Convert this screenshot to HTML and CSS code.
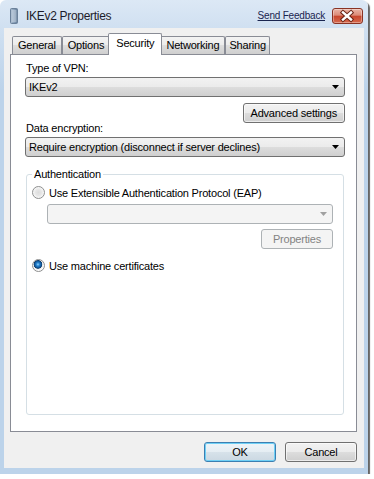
FILE: index.html
```html
<!DOCTYPE html>
<html lang="en">
<head>
    <meta charset="UTF-8">
    <meta name="viewport" content="width=device-width, initial-scale=1.0">
    <title>IKEv2 Properties</title>
    <link rel="stylesheet" href="styles.css">
</head>
<body>
    <div class="window">
        <div class="titlebar">
            <svg class="app-icon" width="8" height="16" viewBox="0 0 8 16">
                <defs>
                    <linearGradient id="tower" x1="0" y1="0" x2="1" y2="0">
                        <stop offset="0" stop-color="#a9bccf"/>
                        <stop offset="0.5" stop-color="#8ba2bb"/>
                        <stop offset="1" stop-color="#5e7894"/>
                    </linearGradient>
                </defs>
                <rect x="0.5" y="0.5" width="7" height="15" rx="1" fill="url(#tower)" stroke="#6b819a"/>
                <path d="M1.5 3h5M1.5 5h5M1.5 7h5M1.5 9h5M1.5 11h5M1.5 13h5" stroke="#dfe8f1" stroke-width="0.8"/>
            </svg>
            <span class="title">IKEv2 Properties</span>
            <a class="feedback" href="#">Send Feedback</a>
            <span class="close-btn">
                <svg width="29" height="14" viewBox="0 0 29 14">
                    <path d="M10 3.5l8 7M18 3.5l-8 7" stroke="#6a2316" stroke-width="4.4" stroke-linecap="square"/>
                    <path d="M10 3.5l8 7M18 3.5l-8 7" stroke="#fff" stroke-width="2.4" stroke-linecap="square"/>
                </svg>
            </span>
        </div>

        <div class="client">
            <div class="tabs">
                <span class="tab">General</span>
                <span class="tab">Options</span>
                <span class="tab active">Security</span>
                <span class="tab">Networking</span>
                <span class="tab narrow">Sharing</span>
            </div>

            <div class="panel">
                <div class="field-label">Type of VPN:</div>
                <div class="combo">
                    <span>IKEv2</span>
                    <svg class="arrow" width="7" height="4" viewBox="0 0 7 4"><path d="M0 0h7L3.5 4z"/></svg>
                </div>
                <div class="btn-row">
                    <span class="btn">Advanced settings</span>
                </div>

                <div class="field-label second">Data encryption:</div>
                <div class="combo">
                    <span>Require encryption (disconnect if server declines)</span>
                    <svg class="arrow" width="7" height="4" viewBox="0 0 7 4"><path d="M0 0h7L3.5 4z"/></svg>
                </div>

                <fieldset class="group">
                    <legend>Authentication</legend>
                    <div class="radio-row">
                        <span class="radio"></span>
                        <span>Use Extensible Authentication Protocol (EAP)</span>
                    </div>
                    <div class="combo disabled">
                        <span></span>
                        <svg class="arrow" width="7" height="4" viewBox="0 0 7 4"><path d="M0 0h7L3.5 4z"/></svg>
                    </div>
                    <div class="btn-row tight">
                        <span class="btn disabled">Properties</span>
                    </div>
                    <div class="radio-row lower">
                        <span class="radio checked"></span>
                        <span>Use machine certificates</span>
                    </div>
                </fieldset>
            </div>

            <div class="actions">
                <span class="btn default">OK</span>
                <span class="btn">Cancel</span>
            </div>
        </div>
    </div>
</body>
</html>
```

FILE: styles.css
```css
body {
    margin: 0;
    font-family: "Liberation Sans", Arial, sans-serif;
    font-size: 11px;
    letter-spacing: -0.2px;
    color: #000;
    background: #fff;
}
.window {
    width: 368px;
    height: 474px;
    display: flex;
    flex-direction: column;
    background: linear-gradient(#dce8f5, #d0e0f1 28px, #bcd3ea 90px, #bcd3ea);
    border-radius: 6px 6px 0 0;
    box-shadow: 2px 2px 1px rgba(0, 0, 0, 0.6);
}
.titlebar {
    height: 28px;
    flex-shrink: 0;
    display: flex;
    align-items: center;
    padding: 3px 5px 0 10px;
    box-sizing: border-box;
}
.app-icon {
    margin-right: 8px;
}
.title {
    flex: 1;
    font-size: 12px;
    letter-spacing: -0.3px;
    color: #1c1c2a;
}
.feedback {
    font-size: 10px;
    color: #1a2550;
    margin-right: 7px;
}
.close-btn {
    width: 31px;
    height: 16px;
    box-sizing: border-box;
    display: flex;
    border: 1px solid #8a3324;
    border-radius: 3px;
    background: linear-gradient(#eab4a6, #dc8a76 45%, #c8452c 50%, #d66a4e);
    box-shadow: inset 0 0 0 1px rgba(255, 255, 255, 0.35);
}
.client {
    height: 440px;
    margin: 0 4px;
    padding-top: 5px;
    box-sizing: border-box;
    display: flex;
    flex-direction: column;
    background: #f0f0f0;
}
.tabs {
    height: 22px;
    display: flex;
    align-items: flex-end;
    margin: 0 0 -1px 8px;
    position: relative;
    z-index: 1;
}
.tab {
    height: 18px;
    margin-bottom: 1px;
    padding: 0 5px;
    box-sizing: border-box;
    line-height: 17px;
    border: 1px solid #898c95;
    border-bottom: none;
    border-radius: 2px 2px 0 0;
    background: linear-gradient(#f3f3f3, #ebebeb 50%, #dddddd 50%, #cfcfcf);
}
.tab.narrow {
    padding: 0 3px;
}
.tab.active {
    height: 22px;
    margin: 0 -2px;
    padding: 0 7px;
    line-height: 18px;
    background: #fff;
    position: relative;
}
.panel {
    height: 378px;
    margin: 0 7px 0 6px;
    padding: 6px 11px 16px 14px;
    box-sizing: border-box;
    display: flex;
    flex-direction: column;
    border: 1px solid #898c95;
    background: #fff;
}
.field-label {
    line-height: 14px;
    margin-left: 1px;
}
.field-label.second {
    margin-top: -2px;
}
.combo {
    height: 20px;
    margin-top: 2px;
    padding: 0 5px 0 3px;
    box-sizing: border-box;
    display: flex;
    align-items: center;
    justify-content: space-between;
    border: 1px solid #707070;
    border-radius: 3px;
    background: linear-gradient(#f2f2f2, #ebebeb 50%, #dddddd 50%, #cfcfcf);
}
.combo.disabled {
    margin: 4px 0 0 15px;
    border-color: #adb2b5;
    background: #f4f4f4;
}
.combo.disabled .arrow {
    fill: #a0a0a0;
}
.btn-row {
    display: flex;
    justify-content: flex-end;
    margin-top: 6px;
}
.btn-row.tight {
    margin-top: 5px;
}
.btn {
    height: 20px;
    min-width: 72px;
    padding: 0 7px;
    box-sizing: border-box;
    display: flex;
    align-items: center;
    justify-content: center;
    border: 1px solid #707070;
    border-radius: 3px;
    background: linear-gradient(#f2f2f2, #ebebeb 50%, #dddddd 50%, #cfcfcf);
    box-shadow: inset 0 0 0 1px rgba(255, 255, 255, 0.6);
}
.btn.disabled {
    color: #838383;
    border-color: #adb2b5;
    background: #f4f4f4;
    box-shadow: none;
}
.btn.default {
    border-color: #3c7fb1;
    background: linear-gradient(#eef4f8, #e5edf3 50%, #d7e2ea 50%, #cbd8e2);
    box-shadow: inset 0 0 0 1px #6fd0f6;
}
.group {
    flex: 1;
    min-width: 0;
    margin: 10px 1px 0 1px;
    padding: 0 10px 0 5px;
    border: 1px solid #d5dfe5;
    border-radius: 3px;
}
.group legend {
    padding: 0 2px;
    line-height: 14px;
}
.radio-row {
    height: 15px;
    margin-top: 4px;
    display: flex;
    align-items: center;
}
.radio-row.lower {
    margin-top: 9px;
}
.radio {
    width: 13px;
    height: 13px;
    margin-right: 4px;
    box-sizing: border-box;
    border: 1px solid #8e8f8f;
    border-radius: 50%;
    background: radial-gradient(circle at 50% 50%, #dcdcdc 0, #e6e6e6 3px, #fbfbfb 6px);
}
.radio.checked {
    background: radial-gradient(circle at 45% 40%, #9ad9ff 0, #2d8ad6 1.5px, #0c4f8e 3.5px, #123d6b 4px, #e9e9e9 4.6px, #fbfbfb 6px);
}
.actions {
    display: flex;
    justify-content: flex-end;
    gap: 9px;
    padding: 10px 7px 0 0;
}
```
